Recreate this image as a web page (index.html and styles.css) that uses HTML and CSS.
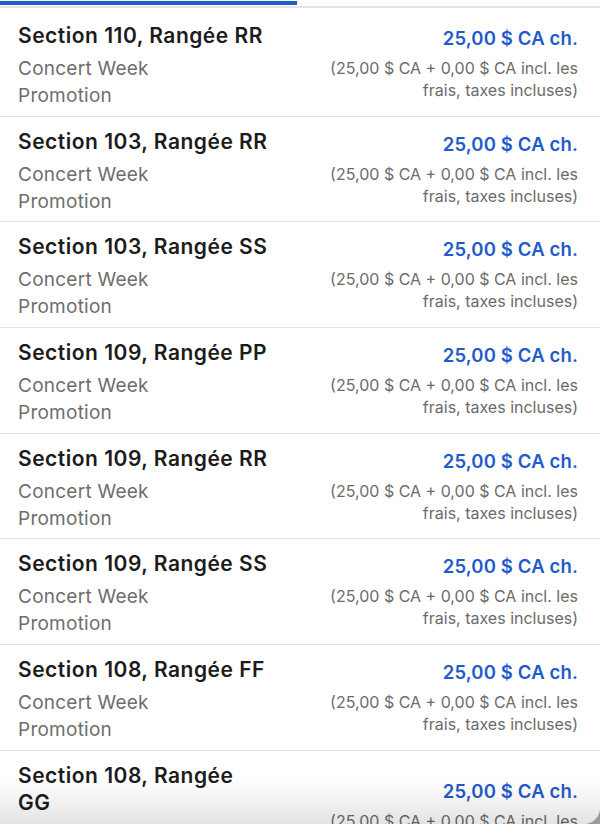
FILE: index.html
```html
<!DOCTYPE html>
<html lang="fr">
<head>
<meta charset="utf-8">
<title>Billets</title>
<link rel="stylesheet" href="styles.css">
</head>
<body>
<div class="sheet">
  <div class="progress"><div class="progress-fill" style="width:297px"></div></div>
  <ul class="list">
    <li class="row first">
      <div class="info"><div class="title">Section 110, Rangée RR</div><div class="sub">Concert Week Promotion</div></div>
      <div class="price"><div class="amount">25,00 $ CA ch.</div><div class="detail">(25,00 $ CA + 0,00 $ CA incl. les frais, taxes incluses)</div></div>
    </li>
    <li class="row">
      <div class="info"><div class="title">Section 103, Rangée RR</div><div class="sub">Concert Week Promotion</div></div>
      <div class="price"><div class="amount">25,00 $ CA ch.</div><div class="detail">(25,00 $ CA + 0,00 $ CA incl. les frais, taxes incluses)</div></div>
    </li>
    <li class="row">
      <div class="info"><div class="title">Section 103, Rangée SS</div><div class="sub">Concert Week Promotion</div></div>
      <div class="price"><div class="amount">25,00 $ CA ch.</div><div class="detail">(25,00 $ CA + 0,00 $ CA incl. les frais, taxes incluses)</div></div>
    </li>
    <li class="row">
      <div class="info"><div class="title">Section 109, Rangée PP</div><div class="sub">Concert Week Promotion</div></div>
      <div class="price"><div class="amount">25,00 $ CA ch.</div><div class="detail">(25,00 $ CA + 0,00 $ CA incl. les frais, taxes incluses)</div></div>
    </li>
    <li class="row">
      <div class="info"><div class="title">Section 109, Rangée RR</div><div class="sub">Concert Week Promotion</div></div>
      <div class="price"><div class="amount">25,00 $ CA ch.</div><div class="detail">(25,00 $ CA + 0,00 $ CA incl. les frais, taxes incluses)</div></div>
    </li>
    <li class="row">
      <div class="info"><div class="title">Section 109, Rangée SS</div><div class="sub">Concert Week Promotion</div></div>
      <div class="price"><div class="amount">25,00 $ CA ch.</div><div class="detail">(25,00 $ CA + 0,00 $ CA incl. les frais, taxes incluses)</div></div>
    </li>
    <li class="row">
      <div class="info"><div class="title">Section 108, Rangée FF</div><div class="sub">Concert Week Promotion</div></div>
      <div class="price"><div class="amount">25,00 $ CA ch.</div><div class="detail">(25,00 $ CA + 0,00 $ CA incl. les frais, taxes incluses)</div></div>
    </li>
    <li class="row">
      <div class="info"><div class="title">Section 108, Rangée GG</div><div class="sub">Concert Week Promotion</div></div>
      <div class="price"><div class="amount">25,00 $ CA ch.</div><div class="detail">(25,00 $ CA + 0,00 $ CA incl. les frais, taxes incluses)</div></div>
    </li>
  </ul>
</div>
</body>
</html>
```
FILE: styles.css
```css
html, body {
  margin: 0;
  padding: 0;
  background: #9a9a9a;
}
body {
  width: 600px;
  height: 824px;
  overflow: hidden;
  font-family: Inter, "Noto Sans", sans-serif;
}
.sheet {
  position: relative;
  width: 600px;
  height: 824px;
  background: #ffffff;
  border-bottom-right-radius: 16px;
  overflow: hidden;
}
.sheet::after {
  content: "";
  position: absolute;
  left: 0;
  right: 0;
  bottom: 0;
  height: 44px;
  background: linear-gradient(to bottom, rgba(0, 0, 0, 0), rgba(0, 0, 0, 0.11));
  pointer-events: none;
}
.progress {
  height: 5px;
  border-bottom: 2px solid #e4e4e4;
}
.progress-fill {
  height: 4px;
  margin-top: 1px;
  background: #1f5bcb;
}
.list {
  list-style: none;
  margin: 0;
  padding: 0;
}
.row {
  display: flex;
  align-items: center;
  justify-content: space-between;
  gap: 20px;
  padding: 11px 22px 6.67px 18px;
  border-bottom: 1px solid #e2e2e2;
}
.row.first {
  padding-top: 14px;
}
.info {
  width: 251px;
  flex: none;
}
.title {
  font-size: 21px;
  line-height: 27px;
  font-weight: 600;
  letter-spacing: 0.5px;
  color: #1c1c1c;
}
.sub {
  margin-top: 6px;
  max-width: 160px;
  font-size: 19px;
  line-height: 27px;
  letter-spacing: 0.25px;
  color: #6e6e6e;
}
.price {
  width: 256px;
  flex: none;
  text-align: right;
  padding-bottom: 5px;
}
.amount {
  font-size: 18.5px;
  line-height: 26px;
  font-weight: 600;
  letter-spacing: 0.15px;
  color: #1f5bcb;
}
.detail {
  margin-top: 6px;
  font-size: 16px;
  line-height: 22px;
  color: #6b6b6b;
}
```
